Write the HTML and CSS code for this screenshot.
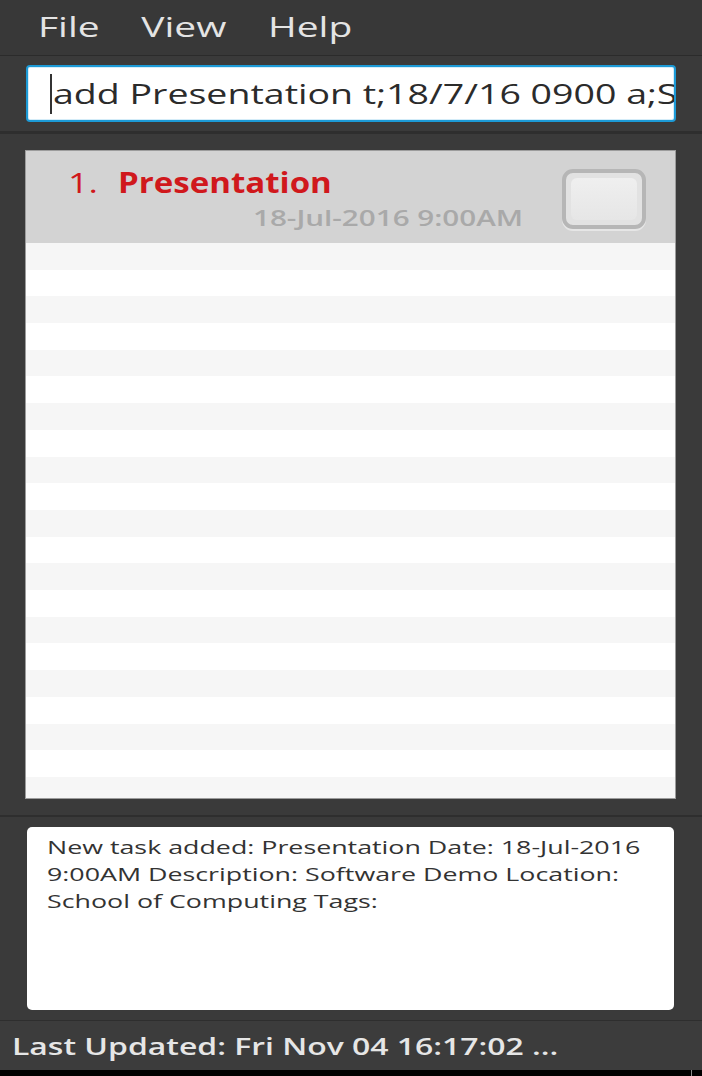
FILE: index.html
```html
<!DOCTYPE html>
<html lang="en">
<head>
<meta charset="utf-8">
<title>Task Manager</title>
<link rel="stylesheet" href="styles.css">
</head>
<body>
<div class="app">
  <nav class="menubar">
    <span class="menu-group sx">
      <span class="menu-item">File</span>
      <span class="menu-item">View</span>
      <span class="menu-item">Help</span>
    </span>
  </nav>

  <section class="command-pane">
    <div class="command-box">
      <span class="caret"></span>
      <span class="command-text sx">add Presentation t;18/7/16 0900 a;Software Demo</span>
    </div>
  </section>

  <section class="list-pane">
    <div class="task-list">
      <div class="task-card">
        <div class="task-info">
          <div class="task-title">
            <span class="task-num"><span class="sx">1.</span></span>
            <span class="task-name sx">Presentation</span>
          </div>
          <div class="task-date"><span class="sx">18-Jul-2016 9:00AM</span></div>
        </div>
        <div class="checkbox"><div class="checkbox-inner"></div></div>
      </div>
      <div class="empty-rows"></div>
    </div>
  </section>

  <section class="result-pane">
    <div class="result-box">
      <div class="result-line"><span class="sx">New task added: Presentation Date: 18-Jul-2016</span></div>
      <div class="result-line"><span class="sx">9:00AM Description: Software Demo Location:</span></div>
      <div class="result-line"><span class="sx">School of Computing Tags:</span></div>
    </div>
  </section>

  <footer class="statusbar">
    <span class="status-text sx">Last Updated: Fri Nov 04 16:17:02 ...</span>
  </footer>
  <div class="bottom-strip"><span class="strip-mark"></span></div>
</div>
</body>
</html>
```

FILE: styles.css
```css
* { box-sizing: border-box; }
html, body { margin: 0; padding: 0; }
body {
  background: #000;
  font-family: "Open Sans", "Noto Sans", sans-serif;
  width: 702px;
  height: 1076px;
  overflow: hidden;
}
.app {
  display: flex;
  flex-direction: column;
  width: 702px;
  height: 1076px;
  background: #3a3a3a;
}
.sx {
  display: inline-block;
  white-space: nowrap;
  transform: scaleX(var(--sx, 1.28));
  transform-origin: left center;
}

/* menu */
.menubar {
  flex: none;
  height: 56px;
  background: #383838;
  border-bottom: 1px solid #2b2b2b;
  padding-left: 38px;
  line-height: 53px;
  font-size: 28px;
  color: #e4e4e4;
}
.menu-group { display: inline-flex; gap: 30px; --sx: 1.39; }

/* command */
.command-pane {
  flex: none;
  height: 78px;
  padding: 9px 26px 0 26px;
  background: #3a3a3a;
  border-bottom: 3px solid #2e2e2e;
}
.command-box {
  height: 57px;
  border: 2px solid #1c9ad6;
  border-radius: 4px;
  background: #fff;
  box-shadow: inset 0 0 0 1px #d4ecf8;
  display: flex;
  align-items: center;
  padding-left: 22px;
  overflow: hidden;
  font-size: 28px;
  line-height: 53px;
  color: #2b2b2b;
}
.command-text { --sx: 1.34; }
.caret {
  flex: none;
  width: 2px;
  height: 40px;
  background: #333;
  margin-right: 1px;
}

/* list */
.list-pane {
  flex: none;
  height: 683px;
  padding: 16px 26px 0 25px;
  background: #3a3a3a;
  border-bottom: 2px solid #2e2e2e;
}
.task-list {
  height: 649px;
  border: 1px solid #9c9c9c;
  background: #fff;
  display: flex;
  flex-direction: column;
}
.task-card {
  height: 92px;
  flex: none;
  background: #d3d3d3;
  display: flex;
  justify-content: space-between;
}
.task-info { padding: 12px 0 0 42px; }
.task-title {
  display: flex;
  font-size: 28px;
  line-height: 38px;
  color: #d0181c;
}
.task-num { width: 50px; }
.task-name { font-weight: 700; --sx: 1.18; }
.task-date {
  margin: 3px 0 0 185px;
  font-size: 21px;
  line-height: 28px;
  color: #a9a9a9;
  font-weight: 600;
  --sx: 1.41;
}
.checkbox {
  flex: none;
  width: 84px;
  height: 60px;
  margin: 18px 29px 0 0;
  border: 4px solid #b6b6b6;
  border-radius: 11px;
  background: #e2e2e2;
  padding: 5px;
  box-shadow: 0 2px 0 #e6e6e6;
}
.checkbox-inner {
  height: 100%;
  border-radius: 6px;
  background: linear-gradient(#efefef, #e6e6e6);
}
.empty-rows {
  flex: 1;
  background: repeating-linear-gradient(#f6f6f6 0 26.7px, #fff 26.7px 53.4px);
}

/* result */
.result-pane {
  flex: none;
  height: 204px;
  padding: 10px 28px 0 27px;
  background: #3a3a3a;
  border-bottom: 1px solid #2e2e2e;
}
.result-box {
  height: 183px;
  background: #fff;
  border-radius: 5px;
  padding: 7px 0 0 20px;
  font-size: 19px;
  line-height: 27px;
  color: #333;
  --sx: 1.41;
}

/* status */
.statusbar {
  flex: none;
  height: 49px;
  background: #3c3c3c;
  padding-left: 12px;
  font-size: 24px;
  line-height: 50px;
  font-weight: 600;
  color: #e6e6e6;
  --sx: 1.33;
}
.bottom-strip {
  flex: 1;
  background: #000;
  padding-left: 691px;
}
.strip-mark {
  display: block;
  width: 1px;
  height: 100%;
  background: #8a8a8a;
}
```
